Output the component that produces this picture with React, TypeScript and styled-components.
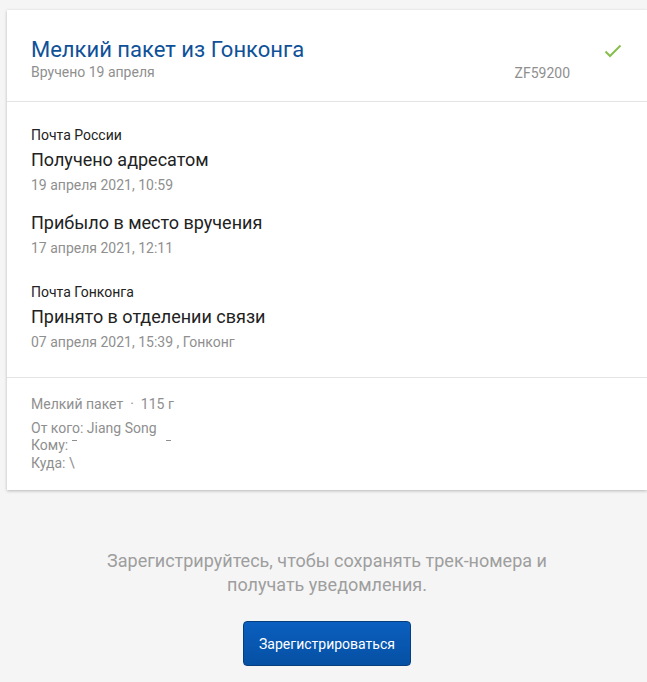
import React from 'react';
import styled, { createGlobalStyle } from 'styled-components';

const GlobalStyle = createGlobalStyle`
    html, body {
        margin: 0;
        padding: 0;
        background: #f5f5f5;
        font-family: Roboto, 'Liberation Sans', sans-serif;
        overflow: hidden;
    }
`;

const Page = styled.div`
    padding: 10px 0 0 7px;
`;

const Card = styled.section`
    background: #fff;
    box-shadow: 0 1px 3px rgb(0 0 0 / 25%);
`;

const Header = styled.header`
    display: grid;
    grid-template-columns: 1fr auto auto;
    align-items: start;
    padding: 27px 24px 20px 24px;
    border-bottom: 1px solid #e3e3e3;
`;

const Title = styled.h1`
    margin: 0;
    font-size: 22px;
    line-height: 26px;
    font-weight: 400;
    color: #0e5199;
`;

const Muted = styled.div<{ $size?: number }>`
    font-size: ${(p) => p.$size ?? 14}px;
    line-height: 18px;
    color: #8f8f8f;
`;

const TrackNumber = styled(Muted)`
    align-self: end;
    margin-right: 34px;
    line-height: 16px;
`;

const Check = styled.svg`
    margin: 7px 1px 0 0;
`;

const Events = styled.div`
    display: flex;
    flex-direction: column;
    gap: 17px;
    padding: 24px 24px 26px;
    border-bottom: 1px solid #e3e3e3;
`;

const Event = styled.div`
    display: flex;
    flex-direction: column;
`;

const Operator = styled.div`
    font-size: 14px;
    line-height: 18px;
    color: #222;
    margin-bottom: 4px;

    ${Event}:not(:first-child) > & {
        margin-top: 9px;
    }
`;

const Status = styled.div`
    font-size: 18px;
    line-height: 24px;
    color: #222;
    margin-bottom: 4px;
`;

const Details = styled.div`
    padding: 18px 24px 18px;
    font-size: 14px;
    line-height: 17.5px;
    color: #8f8f8f;
`;

const Kind = styled.div`
    margin-bottom: 6px;
`;

const Dot = styled.span`
    margin: 0 7px;
`;

const Redacted = styled.span<{ $gap: number }>`
    display: inline-block;
    width: 5px;
    height: 1px;
    margin-left: ${(p) => p.$gap}px;
    vertical-align: text-top;
    position: relative;
    top: 3px;
    background: #8f8f8f;
`;

const Promo = styled.div`
    display: flex;
    flex-direction: column;
    align-items: center;
    padding-top: 59px;
`;

const PromoText = styled.p`
    margin: 0;
    text-align: center;
    font-size: 18px;
    line-height: 24px;
    color: #9e9e9e;
    max-width: 470px;
`;

const RegisterButton = styled.button`
    margin-top: 24px;
    width: 168px;
    height: 45px;
    border: 1px solid #063f7e;
    border-radius: 4px;
    background: linear-gradient(#0b5fbf, #0550a3);
    color: #fff;
    font-family: inherit;
    font-size: 14px;
    cursor: pointer;
`;

const events = [
    { operator: 'Почта России', status: 'Получено адресатом', date: '19 апреля 2021, 10:59' },
    { status: 'Прибыло в место вручения', date: '17 апреля 2021, 12:11' },
    { operator: 'Почта Гонконга', status: 'Принято в отделении связи', date: '07 апреля 2021, 15:39 , Гонконг' },
];

export default function App() {
    return (
        <Page>
            <GlobalStyle />
            <Card>
                <Header>
                    <div>
                        <Title>Мелкий пакет из Гонконга</Title>
                        <Muted>Вручено 19 апреля</Muted>
                    </div>
                    <TrackNumber>ZF59200</TrackNumber>
                    <Check width="18" height="14" viewBox="0 0 18 14">
                        <path d="M1.5 7.5 L6 12 L16.5 1.5" fill="none" stroke="#86bf4c" strokeWidth="2" />
                    </Check>
                </Header>
                <Events>
                    {events.map(({ operator, status, date }) => (
                        <Event key={status}>
                            {operator && <Operator>{operator}</Operator>}
                            <Status>{status}</Status>
                            <Muted>{date}</Muted>
                        </Event>
                    ))}
                </Events>
                <Details>
                    <Kind>
                        Мелкий пакет<Dot>·</Dot>115 г
                    </Kind>
                    <div>От кого: Jiang Song</div>
                    <div>
                        Кому:<Redacted $gap={4} />
                        <Redacted $gap={89} />
                    </div>
                    <div>Куда: \</div>
                </Details>
            </Card>
            <Promo>
                <PromoText>
                    Зарегистрируйтесь, чтобы сохранять трек-номера и получать уведомления.
                </PromoText>
                <RegisterButton type="button">Зарегистрироваться</RegisterButton>
            </Promo>
        </Page>
    );
}
